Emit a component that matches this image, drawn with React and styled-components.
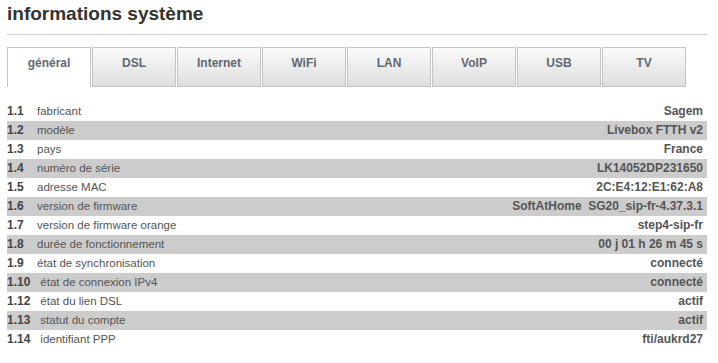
import React from "react";
import styled, { createGlobalStyle } from "styled-components";

const Global = createGlobalStyle`
  html, body { margin: 0; padding: 0; background: #fff; }
  body { font-family: "Liberation Sans", Arial, sans-serif; }
`;

const Page = styled.div`
  width: 700px;
  padding: 0 0 0 7px;
`;

const Title = styled.h1`
  margin: 0;
  padding: 3px 0 9px;
  font-size: 19px;
  line-height: 22px;
  font-weight: bold;
  color: #333;
  border-bottom: 1px solid #cfcfcf;
`;

const Tabs = styled.div`
  display: flex;
  gap: 1px;
  margin-top: 12px;
`;

const Tab = styled.div`
  box-sizing: border-box;
  width: 84px;
  height: 40px;
  padding-top: 8px;
  text-align: center;
  font-size: 12px;
  line-height: 14px;
  font-weight: bold;
  color: #626870;
  border: 1px solid #c4c4c4;
  border-bottom: ${(p) => (p.$active ? "none" : "1px solid #c4c4c4")};
  background: ${(p) =>
    p.$active ? "#fff" : "linear-gradient(#fbfbfb, #dedede)"};
`;

const Rows = styled.div`
  margin-top: 15px;
`;

const Row = styled.div`
  display: flex;
  align-items: baseline;
  height: 19px;
  line-height: 19px;
  padding-right: 4px;
  font-size: 11.5px;
  color: #555;
  background: ${(p) => (p.$alt ? "#cccccc" : "transparent")};
`;

const Num = styled.span`
  min-width: 20px;
  margin-right: 10px;
  font-size: 12px;
  font-weight: bold;
  color: #444;
`;

const Label = styled.span`
  flex: 1;
`;

const Value = styled.span`
  font-size: 12px;
  font-weight: bold;
  color: #555;
  white-space: pre;
`;

const tabs = ["général", "DSL", "Internet", "WiFi", "LAN", "VoIP", "USB", "TV"];

const rows = [
  ["1.1", "fabricant", "Sagem"],
  ["1.2", "modèle", "Livebox FTTH v2"],
  ["1.3", "pays", "France"],
  ["1.4", "numéro de série", "LK14052DP231650"],
  ["1.5", "adresse MAC", "2C:E4:12:E1:62:A8"],
  ["1.6", "version de firmware", "SoftAtHome  SG20_sip-fr-4.37.3.1"],
  ["1.7", "version de firmware orange", "step4-sip-fr"],
  ["1.8", "durée de fonctionnement", "00 j 01 h 26 m 45 s"],
  ["1.9", "état de synchronisation", "connecté"],
  ["1.10", "état de connexion IPv4", "connecté"],
  ["1.12", "état du lien DSL", "actif"],
  ["1.13", "statut du compte", "actif"],
  ["1.14", "identifiant PPP", "fti/aukrd27"],
];

export default function App() {
  return (
    <>
      <Global />
      <Page>
        <Title>informations système</Title>
        <Tabs>
          {tabs.map((t, i) => (
            <Tab key={t} $active={i === 0}>
              {t}
            </Tab>
          ))}
        </Tabs>
        <Rows>
          {rows.map(([n, l, v], i) => (
            <Row key={n} $alt={i % 2 === 1}>
              <Num>{n}</Num>
              <Label>{l}</Label>
              <Value>{v}</Value>
            </Row>
          ))}
        </Rows>
      </Page>
    </>
  );
}
